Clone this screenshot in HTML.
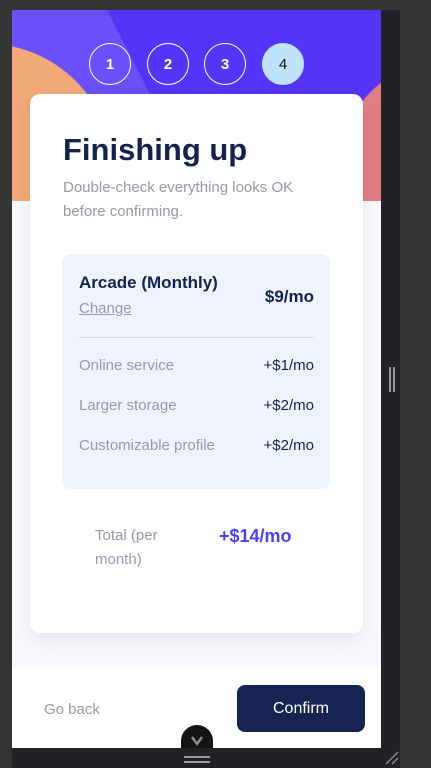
<!DOCTYPE html>
<html><head><style>
*{margin:0;padding:0;box-sizing:border-box}
body{width:431px;height:768px;background:#343434;font-family:"Liberation Sans",sans-serif;position:relative;overflow:hidden}
.panel{position:absolute;left:12px;top:10px;width:388px;height:758px;background:#222226}
.page{position:absolute;left:12px;top:10px;width:369px;height:738px;background:#f8f9fe;overflow:hidden}
.hdr{position:absolute;left:0;top:0;width:369px;height:191px;background:#5534f8;overflow:hidden}
.stripe{position:absolute;left:-70px;top:0;width:165px;height:191px;background:#6a50fb;transform:skewX(27deg);transform-origin:top left}
.oc{position:absolute;left:-150px;top:34px;width:250px;height:250px;border-radius:50%;background:#f0a977}
.rc{position:absolute;left:330px;top:52px;width:200px;height:200px;border-radius:50%;background:#e37d84}
.step{position:absolute;top:33px;width:42px;height:42px;border-radius:50%;border:1.5px solid #fff;color:#fff;font-size:15px;font-weight:bold;text-align:center;line-height:41px}
.step.on{background:#bfe2fd;border-color:#bfe2fd;color:#111;font-weight:normal}
.card{position:absolute;left:18px;top:84px;width:333px;height:539px;background:#fff;border-radius:10px;box-shadow:0 8px 20px rgba(0,0,0,.08)}
.footer{position:absolute;left:0;top:657px;width:369px;height:81px;background:#fff}
.abs{position:absolute;white-space:nowrap}
.box{position:absolute;left:32px;top:160px;width:268px;height:235px;background:#eff3fd;border-radius:8px}
.g{color:#9699aa;font-size:15px}
.n{color:#13224f;font-size:15px}
</style></head><body>
<div class="panel"></div>
<div class="page">
 <div class="hdr"><div class="stripe"></div><div class="oc"></div><div class="rc"></div>
  <div class="step" style="left:77px">1</div>
  <div class="step" style="left:135px">2</div>
  <div class="step" style="left:192px">3</div>
  <div class="step on" style="left:250px">4</div>
 </div>
 <div class="card">
  <div class="abs" style="left:33px;top:38px;font-size:31px;font-weight:bold;color:#13224f">Finishing up</div>
  <div class="abs g" style="left:33px;top:82px;line-height:24px">Double-check everything looks OK<br>before confirming.</div>
  <div class="box">
   <div class="abs" style="left:17px;top:19px;font-size:17px;font-weight:bold;color:#13224f">Arcade (Monthly)</div>
   <div class="abs g" style="left:17px;top:46px;text-decoration:underline">Change</div>
   <div class="abs" style="right:16px;top:33px;font-size:17px;font-weight:bold;color:#13224f">$9/mo</div>
   <div class="abs" style="left:17px;top:83px;width:235px;height:1px;background:#d6d9e6"></div>
   <div class="abs g" style="left:17px;top:103px">Online service</div><div class="abs n" style="right:16px;top:103px">+$1/mo</div>
   <div class="abs g" style="left:17px;top:143px">Larger storage</div><div class="abs n" style="right:16px;top:143px">+$2/mo</div>
   <div class="abs g" style="left:17px;top:183px">Customizable profile</div><div class="abs n" style="right:16px;top:183px">+$2/mo</div>
  </div>
  <div class="abs g" style="left:65px;top:430px;line-height:24px">Total (per<br>month)</div>
  <div class="abs" style="left:189px;top:432px;font-size:18px;font-weight:bold;color:#483eff">+$14/mo</div>
 </div>
 <div class="footer">
  <div class="abs g" style="left:32px;top:34px">Go back</div>
  <div class="abs" style="left:225px;top:18px;width:128px;height:47px;background:#172451;border-radius:8px;color:#fff;font-size:16px;text-align:center;line-height:47px">Confirm</div>
 </div>
 <div class="abs" style="left:169px;top:715px;width:32px;height:40px;border-radius:16px;background:#141414">
  <svg width="32" height="24" style="position:absolute;top:4px;left:0"><path d="M11 8 L16 15 L21 8" stroke="#8a8a8a" stroke-width="2.5" fill="none"/></svg>
 </div>
</div>
<div class="abs" style="left:184px;top:756px;width:26px;height:2px;background:#999"></div>
<div class="abs" style="left:184px;top:761px;width:26px;height:2px;background:#999"></div>
<div class="abs" style="left:389px;top:367px;width:2px;height:25px;background:#999"></div>
<div class="abs" style="left:393px;top:367px;width:2px;height:25px;background:#999"></div>
<svg class="abs" style="left:384px;top:750px" width="16" height="16"><path d="M2 14 L14 2 M8 14 L14 8" stroke="#888" stroke-width="1.5"/></svg>
</body></html>
